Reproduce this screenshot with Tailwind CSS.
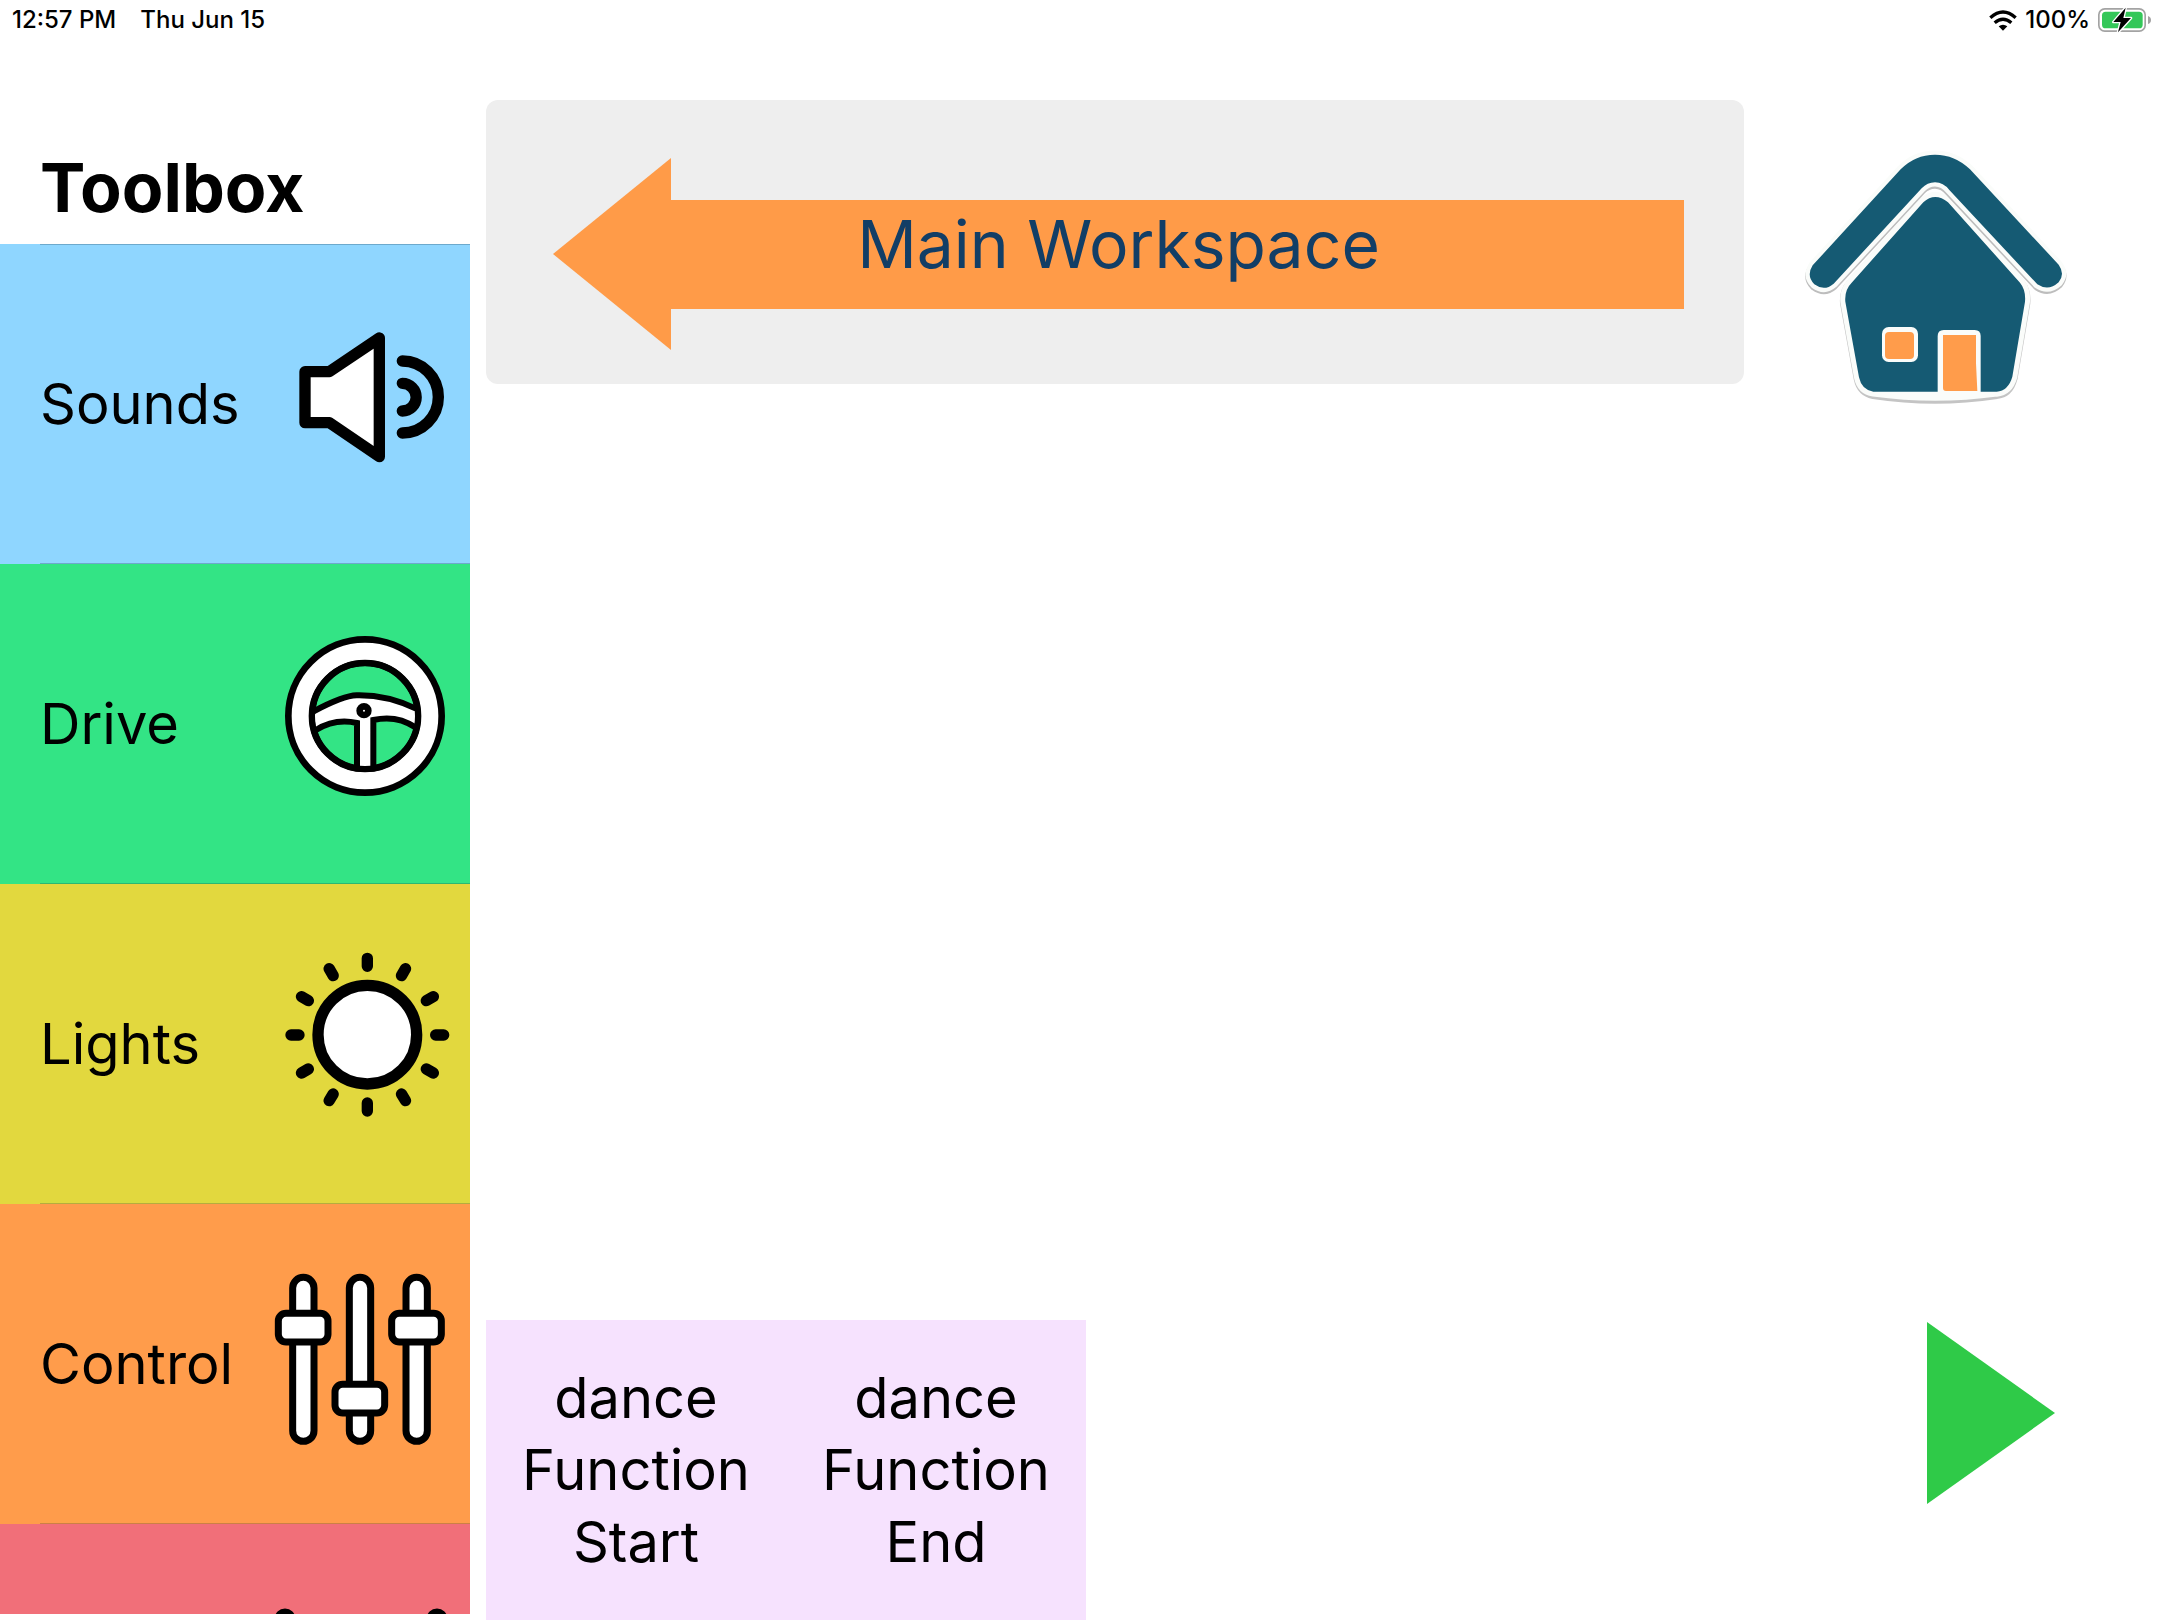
<!DOCTYPE html>
<html lang="en">
<head>
<meta charset="utf-8">
<title>Toolbox</title>
<script src="https://cdn.jsdelivr.net/npm/@tailwindcss/browser@4"></script>
</head>
<body class="flex h-screen flex-col overflow-hidden bg-white font-['Inter',sans-serif] text-black">
  <header class="flex h-10 shrink-0 items-center justify-between pl-3 pr-2 text-2xl font-medium">
    <div class="flex gap-6"><span>12:57 PM</span><span>Thu Jun 15</span></div>
    <div class="flex items-center gap-1.5">
      <svg class="h-6 w-8" viewBox="87 22 96 72" aria-label="Wi-Fi" fill="none" stroke="#000" stroke-width="10">
        <path d="M97 51Q135 17 173 51"/><path d="M110 66Q135 45 160 66"/><path d="M122 77Q135 67 148 77L135 90Z" fill="#000" stroke="none"/>
      </svg>
      <span>100%</span>
      <svg class="h-7 w-14" viewBox="405 18 168 84" aria-label="Battery charging">
        <rect x="413.500" y="26.500" width="139" height="67" rx="18" fill="#fff" stroke="#a3a3a3" stroke-width="5"/>
        <rect x="423" y="35" width="122" height="50" rx="11" fill="#34c759"/>
        <path d="M561 48Q570 51 570 60Q570 69 561 72Z" fill="#a3a3a3"/>
        <path d="M494 23L457 66H479L471 97L510 54H487Z" fill="#000" stroke="#fff" stroke-width="8" stroke-linejoin="round" paint-order="stroke"/>
      </svg>
    </div>
  </header>

  <div class="flex min-h-0 flex-1">
    <aside class="mb-1.5 flex w-[470px] shrink-0 flex-col overflow-hidden">
      <h1 class="flex h-[204px] shrink-0 items-end pb-3 pl-10 text-[68px] leading-[90px] font-bold">Toolbox</h1>
      <nav class="text-[56px] leading-[72px]">
        <button class="relative flex h-80 w-full items-center justify-between bg-[#8fd6ff] pl-10 pr-5 text-left">
          <span class="absolute top-0 right-0 left-10 h-px bg-[#6da9cc]"></span>
          <span class="absolute right-0 bottom-0 left-10 h-px bg-[#6da9cc]"></span>
          <span>Sounds</span>
          <svg class="mb-4 size-[180px]" viewBox="0 -12 540 540" fill="none" stroke="#000" stroke-width="34" stroke-linecap="round" stroke-linejoin="round">
            <path d="M105 185H178L328 84V440L178 338H105Z" fill="#fff"/>
            <path d="M397 153A108 108 0 0 1 397 369M397 220A41.500 41.500 0 0 1 397 303"/>
          </svg>
        </button>
        <button class="relative flex h-80 w-full items-center justify-between bg-[#33e485] pl-10 pr-5 text-left">
          <span class="absolute right-0 bottom-0 left-10 h-px bg-[#2db773]"></span>
          <span>Drive</span>
          <svg class="mb-4 size-[180px]" viewBox="0 18 540 540" fill="none" stroke="#000" stroke-width="20">
            <circle cx="285" cy="288" r="230" fill="#fff"/>
            <circle cx="285" cy="288" r="159" fill="#33e485"/>
            <path d="M131 274Q220 227 260 226Q350 224 438 266L442 325Q380 287 310 300V444H261V309Q195 298 138 328Z" fill="#fff" stroke="none"/>
            <path d="M131 274Q220 227 260 226Q350 224 438 266M138 330Q195 294 261 309V444M310 444V300Q380 284 436 322" stroke-width="18"/>
            <circle cx="285" cy="288" r="159" stroke-width="18"/>
            <circle cx="282" cy="272" r="13" fill="#fff"/>
          </svg>
        </button>
        <button class="relative flex h-80 w-full items-center justify-between bg-[#e2d83e] pl-10 pr-5 text-left">
          <span class="absolute right-0 bottom-0 left-10 h-px bg-[#b5ad3e]"></span>
          <span>Lights</span>
          <svg class="mb-4 size-[180px]" viewBox="0 18 540 540" fill="none" stroke="#000" stroke-width="34" stroke-linecap="round">
            <circle cx="292" cy="284" r="148" fill="#fff"/>
            <path d="M292 55V79M292 489V513M63 285H87M497 285H521M177.500 86L189.500 107M394.500 462L406.500 482M94.500 170L115 182M469 387L490 399M94.500 399L115 387M469 182L490 170M177.500 482L189.500 462M394.500 107L406.500 86"/>
          </svg>
        </button>
        <button class="relative flex h-80 w-full items-center justify-between bg-[#ff9c4b] pl-10 pr-5 text-left">
          <span class="absolute right-0 bottom-0 left-10 h-px bg-[#cc8045]"></span>
          <span>Control</span>
          <svg class="mb-4 size-[180px]" viewBox="30 18 540 540" fill="#fff" stroke="#000" stroke-width="21">
            <rect x="98" y="52" width="64" height="492" rx="32"/><rect x="268" y="52" width="64" height="492" rx="32"/><rect x="438" y="52" width="64" height="492" rx="32"/>
            <rect x="55" y="160" width="149" height="86" rx="23"/><rect x="225" y="373" width="149" height="86" rx="23"/><rect x="395" y="160" width="149" height="86" rx="23"/>
          </svg>
        </button>
        <button class="flex h-80 w-full items-center justify-end bg-[#f16f79] pr-5" aria-label="More blocks">
          <svg class="mb-4 size-[180px]" viewBox="0 0 180 180" stroke="#000" stroke-width="21" stroke-linecap="round">
            <path d="M15 33V150M167 33V150"/>
          </svg>
        </button>
      </nav>
    </aside>

    <main class="ml-4 flex min-w-0 flex-1 flex-col justify-between">
      <section class="mt-[60px] grid h-[284px] items-center rounded-xl bg-[#eee] pr-[60px] pl-[67px]">
        <div class="col-start-1 row-start-1 mt-6 flex h-48 text-[#ff9b48]">
          <svg class="h-full w-[118px] shrink-0" viewBox="0 0 118 192" fill="currentColor"><path d="M0 96L118 0V192Z"/></svg>
          <div class="mt-[42px] mb-[41px] flex-1 bg-current"></div>
        </div>
        <h2 class="col-start-1 row-start-1 mt-1 text-center text-[66px] leading-[84px] text-[#123e66]">Main Workspace</h2>
      </section>
      <section class="flex h-[300px] w-[600px] bg-[#f6e2fe] text-center text-[56px] leading-[72px]">
        <button class="w-1/2 px-8">dance Function Start</button>
        <button class="w-1/2 px-8">dance Function End</button>
      </section>
    </main>

    <aside class="flex w-[416px] shrink-0 flex-col items-end justify-between pt-[100px] pr-20 pb-[116px]">
      <button aria-label="Home">
        <svg class="h-[270px] w-[290px]" viewBox="0 0 870 810">
          <path d="M400 187Q435 155 474 187L690 428Q708 450 705 485L667 710Q655 755 620 757Q435 785 250 757Q215 750 207 712L166 485Q163 450 185 428Z" fill="#c4c4c4" stroke="#c4c4c4" stroke-width="32" stroke-linejoin="round" transform="translate(0 4)"/>
          <path d="M400 187Q435 155 474 187L690 428Q708 450 705 485L667 710Q655 752 620 755Q435 780 250 755Q215 750 207 712L166 485Q163 450 185 428Z" fill="#fafcfa" stroke="#fafcfa" stroke-width="30"/>
          <path d="M332 88Q375 44 435 44Q495 44 540 88L806 374Q826 402 806 427Q775 455 742 433L478 150Q460 127 435 127Q412 127 395 145L131 431Q103 455 73 433Q48 408 68 376Z" fill="#fff" stroke="#bdbdbd" stroke-width="26" stroke-linejoin="round" transform="translate(0 6)"/>
          <path d="M332 88Q375 44 435 44Q495 44 540 88L806 374Q826 402 806 427Q775 455 742 433L478 150Q460 127 435 127Q412 127 395 145L131 431Q103 455 73 433Q48 408 68 376Z" fill="#155a73" stroke="#fafcfa" stroke-width="25" stroke-linejoin="round" paint-order="stroke"/>
          <path d="M400 187Q435 155 474 187L690 428Q708 450 705 485L667 710Q655 752 620 755H250Q215 750 207 712L166 485Q163 450 185 428Z" fill="#155a73"/>
          <path d="M443 756V588Q443 570 461 570H554Q572 570 572 588V756Z" fill="#fafcfa"/>
          <path d="M459 585H558V670L562 753H468Q459 753 459 744Z" fill="#ff9c4b"/>
          <rect x="276" y="561" width="108" height="105" rx="20" fill="#fafcfa"/>
          <rect x="285" y="576" width="87" height="81" rx="12" fill="#ff9c4b"/>
        </svg>
      </button>
      <button aria-label="Run">
        <svg class="h-[182px] w-[154px]" viewBox="0 0 154 182"><path d="M1 0L129 91L1 182Z" fill="#2fca48"/></svg>
      </button>
    </aside>
  </div>
</body>
</html>
